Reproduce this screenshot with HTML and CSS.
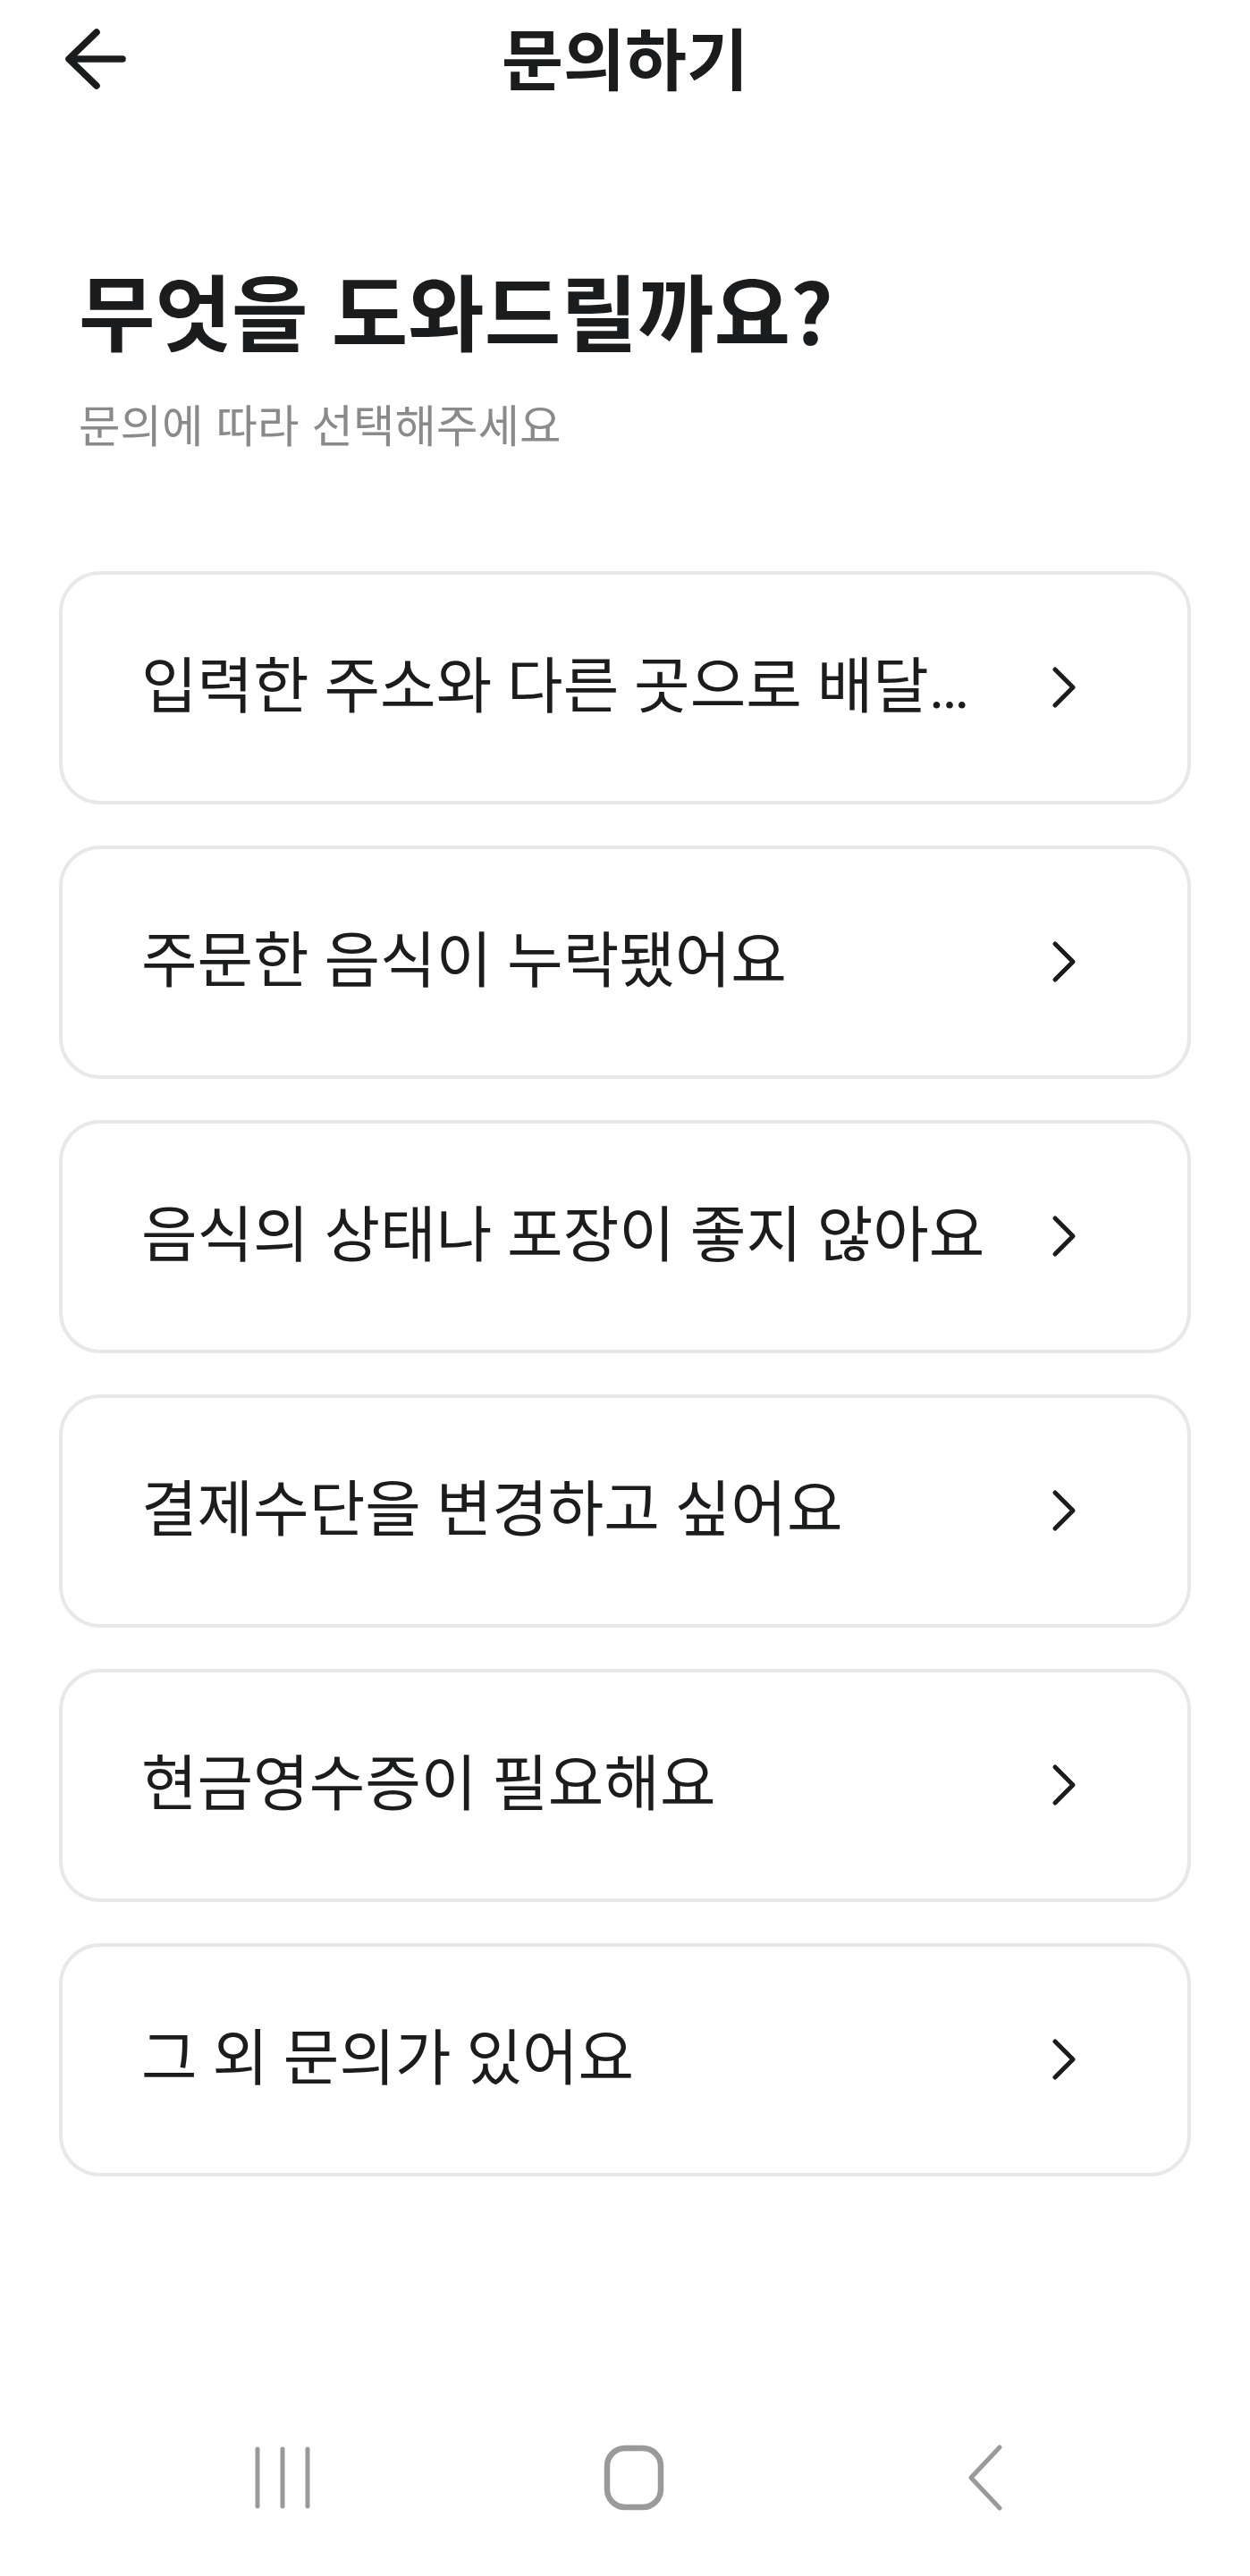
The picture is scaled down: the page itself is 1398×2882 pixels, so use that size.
FILE: index.html
```html
<!DOCTYPE html>
<html lang="ko">
<head>
  <meta charset="UTF-8">
  <meta name="viewport" content="width=device-width,initial-scale=1">
  <title>문의하기</title>
  <link rel="stylesheet" href="styles.css">
</head>
<body>
  <header class="topbar">
    <button class="back-btn" aria-label="뒤로가기">
      <svg width="80" height="80" viewBox="0 0 80 80" fill="none" stroke="#1b1c1e" stroke-width="7.5" stroke-linecap="round" stroke-linejoin="round">
        <path d="M69 40H9M40 10L9 40l31 30"/>
      </svg>
    </button>
    <h1 class="topbar-title">문의하기</h1>
    <span class="topbar-spacer"></span>
  </header>

  <main class="content">
    <section class="intro">
      <h2>무엇을 도와드릴까요?</h2>
      <p>문의에 따라 선택해주세요</p>
    </section>

    <ul class="menu">
      <li class="menu-item">
        <span class="menu-label">입력한 주소와 다른 곳으로 배달됐어요</span>
        <svg class="chev" width="32" height="48" viewBox="0 0 32 48" fill="none" stroke="#1b1c1e" stroke-width="5" stroke-linecap="round" stroke-linejoin="round"><path d="M8 4l20 20L8 44"/></svg>
      </li>
      <li class="menu-item">
        <span class="menu-label">주문한 음식이 누락됐어요</span>
        <svg class="chev" width="32" height="48" viewBox="0 0 32 48" fill="none" stroke="#1b1c1e" stroke-width="5" stroke-linecap="round" stroke-linejoin="round"><path d="M8 4l20 20L8 44"/></svg>
      </li>
      <li class="menu-item">
        <span class="menu-label">음식의 상태나 포장이 좋지 않아요</span>
        <svg class="chev" width="32" height="48" viewBox="0 0 32 48" fill="none" stroke="#1b1c1e" stroke-width="5" stroke-linecap="round" stroke-linejoin="round"><path d="M8 4l20 20L8 44"/></svg>
      </li>
      <li class="menu-item">
        <span class="menu-label">결제수단을 변경하고 싶어요</span>
        <svg class="chev" width="32" height="48" viewBox="0 0 32 48" fill="none" stroke="#1b1c1e" stroke-width="5" stroke-linecap="round" stroke-linejoin="round"><path d="M8 4l20 20L8 44"/></svg>
      </li>
      <li class="menu-item">
        <span class="menu-label">현금영수증이 필요해요</span>
        <svg class="chev" width="32" height="48" viewBox="0 0 32 48" fill="none" stroke="#1b1c1e" stroke-width="5" stroke-linecap="round" stroke-linejoin="round"><path d="M8 4l20 20L8 44"/></svg>
      </li>
      <li class="menu-item">
        <span class="menu-label">그 외 문의가 있어요</span>
        <svg class="chev" width="32" height="48" viewBox="0 0 32 48" fill="none" stroke="#1b1c1e" stroke-width="5" stroke-linecap="round" stroke-linejoin="round"><path d="M8 4l20 20L8 44"/></svg>
      </li>
    </ul>
  </main>

  <nav class="navbar">
    <span class="nav-slot">
      <svg width="64" height="72" viewBox="0 0 64 72" fill="none" stroke="#9a9a9a" stroke-width="5" stroke-linecap="round">
        <path d="M4 4v64M32 4v64M60 4v64"/>
      </svg>
    </span>
    <span class="nav-slot">
      <svg width="72" height="74" viewBox="0 0 72 74" fill="none" stroke="#9a9a9a" stroke-width="6.5">
        <rect x="6" y="4" width="60" height="66" rx="20"/>
      </svg>
    </span>
    <span class="nav-slot">
      <svg width="44" height="76" viewBox="0 0 44 76" fill="none" stroke="#9a9a9a" stroke-width="5" stroke-linecap="round" stroke-linejoin="round">
        <path d="M38 4L6 38l32 34"/>
      </svg>
    </span>
  </nav>
</body>
</html>
```

FILE: styles.css
```css
* { box-sizing: border-box; margin: 0; padding: 0; }
body {
  font-family: "Noto Sans CJK KR", "Noto Sans", sans-serif;
  color: #1b1c1e;
  background: #fff;
  width: 1398px;
  min-height: 2882px;
  display: flex;
  flex-direction: column;
}

/* top bar */
.topbar {
  display: grid;
  grid-template-columns: 200px 1fr 200px;
  align-items: center;
  height: 124px;
}
.back-btn {
  background: none;
  border: none;
  width: 80px;
  height: 80px;
  margin: 8px 0 0 68px;
}
.back-btn svg { display: block; }
.topbar-title {
  text-align: center;
  font-size: 75px;
  font-weight: 700;
  line-height: 1;
}

/* intro */
.content { padding: 0 66px; }
.intro { padding: 175px 0 0 22px; }
.intro h2 {
  font-size: 93px;
  font-weight: 700;
  line-height: 1;
}
.intro p {
  margin-top: 56px;
  font-size: 50.5px;
  line-height: 1;
  color: #8a8a8c;
}

/* menu list */
.menu {
  list-style: none;
  display: flex;
  flex-direction: column;
  gap: 46px;
  margin-top: 140px;
}
.menu-item {
  display: flex;
  align-items: center;
  height: 261px;
  padding: 0 124px 0 88px;
  border: 4px solid #e8e8ea;
  border-radius: 46px;
}
.menu-label {
  flex: 1;
  min-width: 0;
  font-family: Roboto, "Noto Sans CJK KR", sans-serif;
  font-size: 68px;
  line-height: 1.6;
  white-space: nowrap;
  overflow: hidden;
  text-overflow: ellipsis;
  margin-right: 62px;
}
.chev { flex: none; display: block; }

/* system nav */
.navbar {
  margin-top: auto;
  height: 220px;
  display: flex;
  justify-content: center;
  align-items: center;
  gap: 273px;
  padding-left: 20px;
}
.nav-slot {
  width: 120px;
  display: flex;
  justify-content: center;
}
.nav-slot svg { display: block; }
```
